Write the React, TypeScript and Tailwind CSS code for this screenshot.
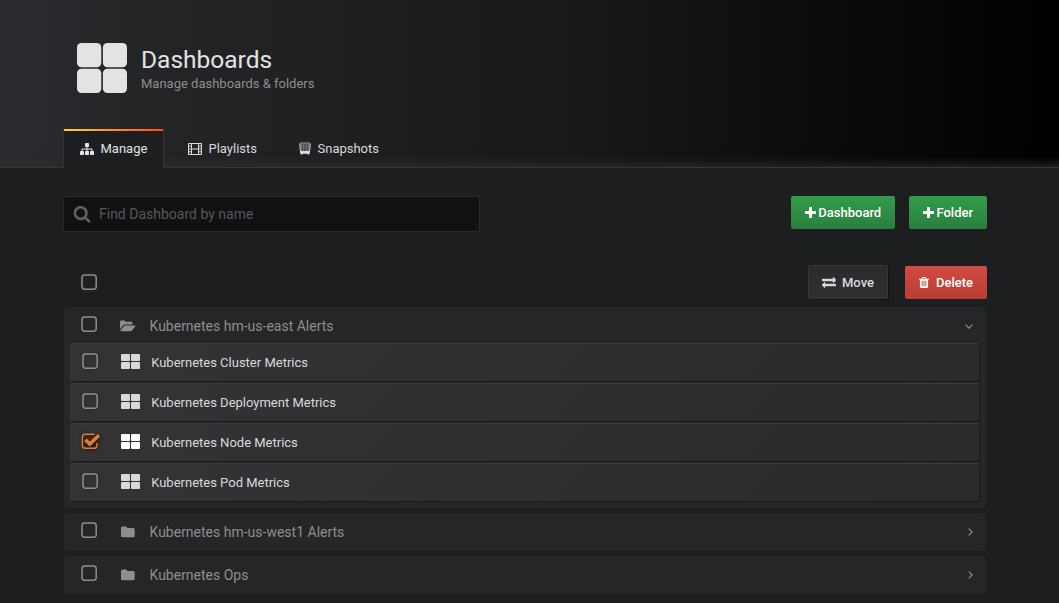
import type { ReactNode } from "react";

const PATHS = {
  sitemap:
    "M1792 1248v320q0 40-28 68t-68 28h-320q-40 0-68-28t-28-68v-320q0-40 28-68t68-28h96v-192h-512v192h96q40 0 68 28t28 68v320q0 40-28 68t-68 28h-320q-40 0-68-28t-28-68v-320q0-40 28-68t68-28h96v-192h-512v192h96q40 0 68 28t28 68v320q0 40-28 68t-68 28h-320q-40 0-68-28t-28-68v-320q0-40 28-68t68-28h96v-192q0-52 38-90t90-38h512v-192h-96q-40 0-68-28t-28-68v-320q0-40 28-68t68-28h320q40 0 68 28t28 68v320q0 40-28 68t-68 28h-96v192h512q52 0 90 38t38 90v192h96q40 0 68 28t28 68z",
  search:
    "M1216 832q0-185-131.500-316.500t-316.500-131.500-316.500 131.500-131.500 316.500 131.500 316.500 316.500 131.500 316.500-131.500 131.500-316.500zm512 832q0 52-38 90t-90 38q-54 0-90-38l-343-342q-179 124-399 124-143 0-273.500-55.500t-225-150-150-225-55.500-273.500 55.500-273.500 150-225 225-150 273.500-55.500 273.500 55.500 225 150 150 225 55.500 273.500q0 220-124 399l343 343q37 37 37 90z",
  plus:
    "M1600 736v192q0 40-28 68t-68 28h-416v416q0 40-28 68t-68 28h-192q-40 0-68-28t-28-68v-416h-416q-40 0-68-28t-28-68v-192q0-40 28-68t68-28h416v-416q0-40 28-68t68-28h192q40 0 68 28t28 68v416h416q40 0 68 28t28 68z",
  exchange:
    "M1792 1184v192q0 13-9.500 22.500t-22.500 9.500h-1376v192q0 13-9.500 22.500t-22.500 9.500q-12 0-24-10l-319-320q-9-9-9-22 0-14 9-23l320-320q9-9 23-9 13 0 22.500 9.500t9.500 22.500v192h1376q13 0 22.500 9.500t9.500 22.500zm0-544q0 14-9 23l-320 320q-9 9-23 9-13 0-22.500-9.500t-9.500-22.500v-192h-1376q-13 0-22.500-9.500t-9.500-22.500v-192q0-13 9.500-22.500t22.500-9.500h1376v-192q0-14 9-23t23-9q12 0 24 10l319 319q9 9 9 23z",
  trash:
    "M512 1376v-704q0-14-9-23t-23-9h-64q-14 0-23 9t-9 23v704q0 14 9 23t23 9h64q14 0 23-9t9-23zm256 0v-704q0-14-9-23t-23-9h-64q-14 0-23 9t-9 23v704q0 14 9 23t23 9h64q14 0 23-9t9-23zm256 0v-704q0-14-9-23t-23-9h-64q-14 0-23 9t-9 23v704q0 14 9 23t23 9h64q14 0 23-9t9-23zm-544-992h448l-48-117q-7-9-17-11h-317q-10 2-17 11zm928 32v64q0 14-9 23t-23 9h-96v948q0 83-47 143.500t-113 60.500h-832q-66 0-113-58.500t-47-141.500v-952h-96q-14 0-23-9t-9-23v-64q0-14 9-23t23-9h309l70-167q15-37 54-63t79-26h320q40 0 79 26t54 63l70 167h309q14 0 23 9t9 23z",
};

function Icon({ name, box, className }: { name: keyof typeof PATHS; box: string; className: string }) {
  return (
    <svg viewBox={box} className={`shrink-0 fill-current ${className}`}>
      <path d={PATHS[name]} />
    </svg>
  );
}

function FolderIcon() {
  return (
    <svg viewBox="0 0 14 12" className="h-3 w-3.5 shrink-0 fill-current">
      <path d="M0 2Q0 .5 1.500 .5h3.300Q6.200 .5 6.200 2h6Q13.700 2 13.700 3.500V10q0 1.300-1.400 1.300H1.400Q0 11.300 0 10z" />
    </svg>
  );
}

function FolderOpenIcon() {
  return (
    <svg viewBox="0 0 16 12" className="h-3 w-4 shrink-0 fill-current">
      <path d="M0 1.800Q0 .4 1.300 .4h2.900q1.300 0 1.300 1.300h5.600q1.400 0 1.400 1.400v1.300H5.400Q4 4.400 3 5.500L0 9.200z" />
      <path d="M5.200 5.400h9.700q.9 0 .4.800l-3 4q-.8 1.100-2 1.100H.9q-.9 0-.3-.8l2.900-4q.7-1.100 1.700-1.100z" />
    </svg>
  );
}

function FilmIcon() {
  return (
    <svg viewBox="0 0 14 12" className="h-3 w-3.5 shrink-0" fill="none" stroke="currentColor">
      <rect x="0.5" y="0.5" width="13" height="11" rx="0.7" strokeWidth="1.100" />
      <path d="M3.500 0.500v11M10.500 0.500v11M3.500 6h7" />
      <path d="M0.500 3.200h3M0.500 6h3M0.500 8.800h3M10.500 3.200h3M10.500 6h3M10.500 8.800h3" />
    </svg>
  );
}

function SnapshotIcon() {
  return (
    <svg viewBox="0 0 12 13" className="h-[13px] w-3 shrink-0">
      <path d="M1.800 0.200h8.400l1.300 1.300-.5 8H1l-.5-8z" fill="#77777b" />
      <path d="M2.600 1.800h6.800v7H2.600z" fill="#4c4c50" />
      <path d="M4.600 1.800v7M7.400 1.800v7M2.600 5h6.800" stroke="#85858a" strokeWidth="0.600" />
      <path d="M0.700 1.600l.6 7.500M11.300 1.600l-.6 7.500" stroke="#bcbcc0" strokeWidth="0.900" />
      <path d="M1 9h10v2.500h-.9v1H8.400v-.7H3.600v.7H1.900v-1H1z" fill="#dcdcde" />
    </svg>
  );
}

function GridIcon({ className }: { className: string }) {
  return (
    <svg viewBox="0 0 19 15" className={`h-[15px] w-[19px] shrink-0 fill-current ${className}`}>
      <rect width="9" height="7" rx="1" />
      <rect x="10" width="9" height="7" rx="1" />
      <rect y="8" width="9" height="7" rx="1" />
      <rect x="10" y="8" width="9" height="7" rx="1" />
    </svg>
  );
}

function Checkbox({ checked = false }: { checked?: boolean }) {
  if (checked) {
    return (
      <svg viewBox="0 0 20 18" className="-mr-1 -ml-[1.500px] h-[18px] w-5 shrink-0 text-[#eb7b2c] drop-shadow-[1px_1px_2px_#111]" fill="none" stroke="currentColor">
        <path d="M13.500 2.200H4.200Q1.400 2.200 1.400 5v8.500q0 2.800 2.800 2.800h9q2.800 0 2.800-2.800V11" strokeWidth="1.400" />
        <path d="M4.400 7.700l4.400 4.300L18 3.300" strokeWidth="3.500" />
      </svg>
    );
  }
  return (
    <svg viewBox="0 0 16 16" className="h-4 w-4 shrink-0 drop-shadow-[1px_1px_2px_#2b2b2d]" fill="none" stroke="#8e8e8e" strokeWidth="1.500">
      <rect x="1" y="1" width="14.200" height="14.200" rx="2.700" />
    </svg>
  );
}

function Tab({ icon, label, active = false }: { icon: ReactNode; label: string; active?: boolean }) {
  return (
    <button
      className={
        active
          ? "relative -mb-px flex h-[39px] w-[101px] items-center gap-[6.500px] border-x border-[#333436] bg-[#1d1e20] pl-4 text-[#e3e3e3] before:absolute before:inset-x-0 before:top-0 before:h-0.5 before:bg-[linear-gradient(90deg,#ffd23a,#ff8b30_50%,#ff4a22)]"
          : "flex h-[39px] items-center gap-[6.500px] text-[#d8d9da]"
      }
    >
      {icon}
      {label}
    </button>
  );
}

const DASHBOARDS = [
  { title: "Kubernetes Cluster Metrics" },
  { title: "Kubernetes Deployment Metrics" },
  { title: "Kubernetes Node Metrics", checked: true },
  { title: "Kubernetes Pod Metrics" },
];

function ClosedFolder({ title }: { title: string }) {
  return (
    <div className="flex h-[38px] items-center rounded-[4px] bg-[#262628] pl-[17px] text-sm text-[#8e8e8e]">
      <div className="-mt-1 flex w-10">
        <Checkbox />
      </div>
      <FolderIcon />
      <span className="ml-[14.500px] grow">{title}</span>
      <svg viewBox="0 0 5 8" className="mr-[13px] h-2 w-[5px]" fill="none" stroke="currentColor" strokeWidth="1.200">
        <path d="M0.700 0.600L4.200 4 0.700 7.400" />
      </svg>
    </div>
  );
}

export default function App() {
  return (
    <div className="h-[603px] w-full overflow-hidden bg-[#1d1e20] font-[Roboto,sans-serif] text-[13px] leading-5 text-[#d8d9da]">
      <header className="flex h-[168px] flex-col border-b border-[#353638] bg-[linear-gradient(90deg,#2b2c30,#242527_12%,#202123_28%,#18191a_53%,#0d0d0d_75%,#000)] pl-[63px] shadow-[inset_0_-12px_12px_-10px_#2d2d2d]">
        <div className="flex h-[129px] pt-[43px] pl-[14px]">
          <svg viewBox="0 0 50 50" className="h-[50px] w-[50px] shrink-0 fill-[#e3e3e3]">
            <rect width="24.300" height="24.300" rx="4.500" />
            <rect x="25.900" width="24.100" height="24.300" rx="4.500" />
            <rect y="25.700" width="24.300" height="24.300" rx="4.500" />
            <rect x="25.900" y="25.700" width="24.100" height="24.300" rx="4.500" />
          </svg>
          <div className="ml-[14px] pt-[2px]">
            <h1 className="text-[24.500px] leading-[30px] text-[#e3e3e3]">Dashboards</h1>
            <p className="-mt-px text-[#8e8e8e]">Manage dashboards &amp; folders</p>
          </div>
        </div>
        <nav className="flex h-[38px]">
          <Tab active icon={<Icon name="sitemap" box="0 0 1792 1792" className="h-[14px] w-[14px]" />} label="Manage" />
          <div className="ml-6 flex gap-[41px]">
            <Tab icon={<FilmIcon />} label="Playlists" />
            <div className="flex pl-px">
              <Tab icon={<SnapshotIcon />} label="Snapshots" />
            </div>
          </div>
        </nav>
      </header>

      <main className="w-[987px] pl-[63px]">
        <div className="flex items-start gap-[14px] pt-7">
          <label className="mr-auto flex h-9 w-[417px] items-center rounded-[2px] border border-[#292a2d] bg-[#111113] pl-[8.500px]">
            <Icon name="search" box="0 128 1792 1792" className="mt-px h-[18px] w-[18px] text-[#626264]" />
            <input
              placeholder="Find Dashboard by name"
              className="ml-[8.500px] w-[340px] bg-transparent text-sm outline-none placeholder:text-[#58585a]"
            />
          </label>
          <button className="flex h-[33px] w-[104px] items-center justify-center gap-[2.500px] rounded-[2px] bg-[linear-gradient(#329c4b,#2a7f3e)] font-medium text-white">
            <Icon name="plus" box="192 128 1408 1408" className="h-[11px] w-[11px]" />
            Dashboard
          </button>
          <button className="flex h-[33px] w-[78px] items-center justify-center gap-[2.500px] rounded-[2px] bg-[linear-gradient(#329c4b,#2a7f3e)] font-medium text-white">
            <Icon name="plus" box="192 128 1408 1408" className="h-[11px] w-[11px]" />
            Folder
          </button>
        </div>

        <div className="mt-[33px] flex h-[34px] items-center pl-[18px]">
          <div className="mr-auto flex">
            <Checkbox />
          </div>
          <button className="flex h-[34px] w-[80px] items-center justify-center gap-[6px] rounded-[2px] border border-[#353537] bg-[linear-gradient(#2b2b2d,#303032)] pt-px font-medium shadow-[1px_1px_0_#111]">
            <Icon name="exchange" box="0 128 1792 1792" className="h-[14px] w-[14px] stroke-current stroke-[60]" />
            Move
          </button>
          <button className="mt-px ml-[17px] flex h-[33px] w-[82px] items-center justify-center gap-[7px] rounded-[2px] bg-[linear-gradient(#d14c42,#b93c33)] font-medium text-white">
            <Icon name="trash" box="0 128 1408 1536" className="h-[11px] w-[10px]" />
            Delete
          </button>
        </div>

        <div className="mt-2 mr-px ml-px flex flex-col gap-[5px]">
          <section className="h-[201px] rounded-[4px] bg-[#262628] pr-[7px] pl-[6px]">
            <div className="flex h-9 items-center pt-[2px] pl-[11px] text-sm text-[#8e8e8e]">
              <div className="-mt-1 flex w-[38.500px]">
                <Checkbox />
              </div>
              <FolderOpenIcon />
              <span className="ml-[14px] grow">Kubernetes hm-us-east Alerts</span>
              <svg viewBox="0 0 8 5" className="mr-[6px] h-[5px] w-2" fill="none" stroke="currentColor" strokeWidth="1.200">
                <path d="M0.600 0.700L4 4.200 7.400 0.700" />
              </svg>
            </div>
            <div className="flex flex-col gap-[2px]">
              {DASHBOARDS.map((d) => (
                <div
                  key={d.title}
                  className="flex h-[38px] items-center rounded-[2px] border-t border-l border-t-[#3c3c3e] border-l-[#353537] bg-[linear-gradient(135deg,#343436,#2a2a2c)] pl-[11px] shadow-[1px_1px_0_#18181a]"
                >
                  <div className="-mt-[3px] flex w-[39px]">
                    <Checkbox checked={d.checked} />
                  </div>
                  <GridIcon className={d.checked ? "-mt-[2px] text-white" : "-mt-[2px] text-[#d8d9da]"} />
                  <span className="ml-[11.200px]">{d.title}</span>
                </div>
              ))}
            </div>
          </section>
          <ClosedFolder title="Kubernetes hm-us-west1 Alerts" />
          <ClosedFolder title="Kubernetes Ops" />
        </div>
      </main>
    </div>
  );
}
